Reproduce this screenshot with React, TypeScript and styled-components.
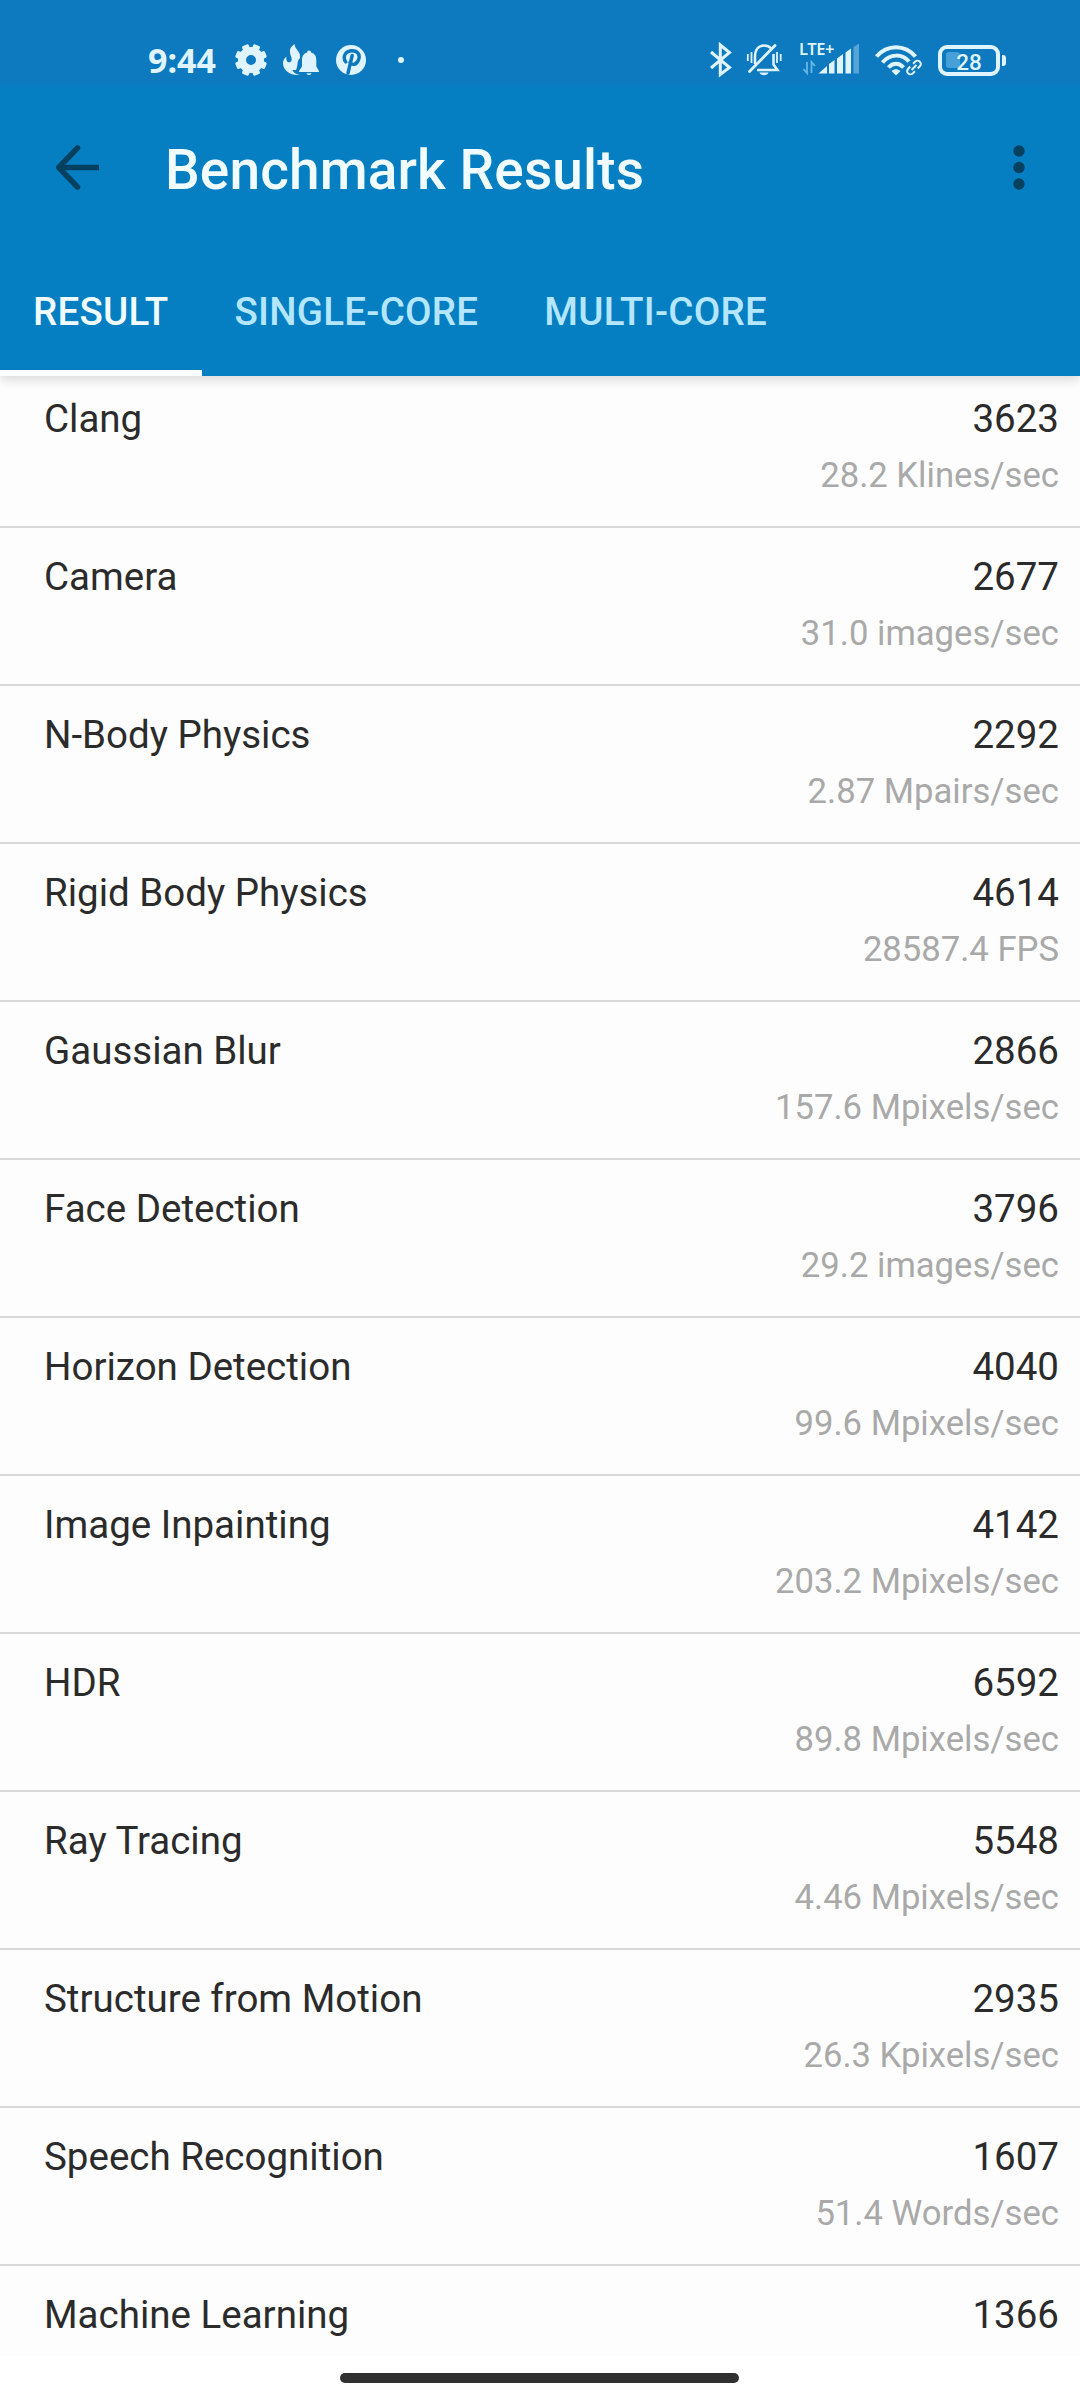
import React from "react";
import styled, { createGlobalStyle } from "styled-components";

const Global = createGlobalStyle`
  * { box-sizing: border-box; }
  body { margin: 0; background: #fdfdfd; font-family: Roboto, "Liberation Sans", sans-serif; }
`;

const Screen = styled.div`
  width: 1080px;
  height: 2400px;
  display: flex;
  flex-direction: column;
  overflow: hidden;
  background: #fdfdfd;
`;

const Header = styled.header`
  position: relative;
  z-index: 1;
  height: 376px;
  flex: none;
  display: flex;
  flex-direction: column;
  background: #057fc2;
  box-shadow: 0 3px 11px rgba(0, 0, 0, 0.16);
`;

const StatusBar = styled.div`
  height: 88px;
  flex: none;
  display: flex;
  justify-content: space-between;
  padding: 30px 80px 0 148px;
  background: linear-gradient(#0d79bf 94%, #057fc2 99%);
  color: #dff4ff;
`;

const Clock = styled.span`
  width: 79px;
  font: 700 34px/60px "Noto Sans", "Open Sans", sans-serif;
`;

const StatusGroup = styled.div`
  display: flex;
  height: 60px;
`;

const AppBar = styled.div`
  height: 160px;
  flex: none;
  display: flex;
  align-items: center;
  padding: 0 36px 1px 50px;
`;

const IconButton = styled.button`
  display: flex;
  padding: 0;
  border: 0;
  background: none;
  color: #04405f;
`;

const Title = styled.h1`
  flex: 1;
  margin: 5px 0 0 61px;
  font-size: 55px;
  line-height: 64px;
  font-weight: 500;
  letter-spacing: 0.12px;
  color: #f0fcff;
`;

const Tabs = styled.nav`
  display: flex;
  height: 128px;
`;

const Tab = styled.button<{ $active?: boolean }>`
  padding: 0 33px 2px;
  border: 0;
  border-top: 6px solid transparent;
  border-bottom: 6px solid ${(p) => (p.$active ? "#fbffff" : "transparent")};
  background: none;
  font: 500 38.5px/45px Roboto, sans-serif;
  letter-spacing: 0.25px;
  color: ${(p) => (p.$active ? "#f0fcff" : "#b5e6ff")};
`;

const List = styled.main`
  height: 1986px;
  flex: none;
  overflow: hidden;
  margin-top: -6px;
`;

const Row = styled.section`
  height: 158px;
  display: flex;
  justify-content: space-between;
  padding: 26px 21px 0 44px;
  border-bottom: 2px solid #d9d9d9;
`;

const Name = styled.span`
  font-size: 38.5px;
  line-height: 45px;
  color: #2b2b2b;
`;

const Values = styled.div`
  display: flex;
  flex-direction: column;
  align-items: flex-end;
  gap: 14px;
`;

const Rate = styled.span`
  font-size: 34.65px;
  line-height: 41px;
  color: #a9a9a9;
`;

const NavBar = styled.footer`
  flex: 1;
  display: flex;
  justify-content: center;
  padding: 17px 1px 0 0;
  background: #fff;
`;

const Handle = styled.div`
  width: 399px;
  height: 10px;
  border-radius: 5px;
  background: #303030;
`;

const results = [
  ["Clang", "3623", "28.2 Klines/sec"],
  ["Camera", "2677", "31.0 images/sec"],
  ["N-Body Physics", "2292", "2.87 Mpairs/sec"],
  ["Rigid Body Physics", "4614", "28587.4 FPS"],
  ["Gaussian Blur", "2866", "157.6 Mpixels/sec"],
  ["Face Detection", "3796", "29.2 images/sec"],
  ["Horizon Detection", "4040", "99.6 Mpixels/sec"],
  ["Image Inpainting", "4142", "203.2 Mpixels/sec"],
  ["HDR", "6592", "89.8 Mpixels/sec"],
  ["Ray Tracing", "5548", "4.46 Mpixels/sec"],
  ["Structure from Motion", "2935", "26.3 Kpixels/sec"],
  ["Speech Recognition", "1607", "51.4 Words/sec"],
  ["Machine Learning", "1366", ""],
];

const teeth = [22.5, 67.5, 112.5, 157.5, 202.5, 247.5, 292.5, 337.5];

const NotificationIcons = () => (
  <svg width="203" height="60" viewBox="0 0 203 60" fill="currentColor">
    <circle cx="24" cy="30" r="9" fill="none" stroke="currentColor" strokeWidth="8" />
    {teeth.map((a) => (
      <rect key={a} x="20.4" y="14" width="7.2" height="6" rx="1.6" transform={`rotate(${a} 24 30)`} />
    ))}
    <path d="M67.500 14C68 20 74 21 73 28C69.500 31 71.500 35 69 40H65.500C67 44 71 44.500 73 45C63 46 56 40 56 33.500C56 30.500 57 28.500 59.500 26.500C58.500 31 61 33 63.500 32C67 29 62 25 63 20C63.400 17.500 65 16 67.500 14Z" />
    <path d="M82 20.500C83.300 20.500 84 21.300 84 22.500C88 23.500 89.300 26.500 89.300 30V36.500L92 41V42H72V41L75 36.500V30C75 26.500 76.500 23.500 80.200 22.500C80.200 21.300 80.800 20.500 82 20.500ZM79.500 43.300H84.500C84 45.700 80 45.700 79.500 43.300Z" />
    <circle cx="124" cy="30" r="15" />
    <path d="M121 43L125.200 25.500M118.800 32C115 27 118.500 20.800 125 20.800C131 20.800 133.500 25 131.500 30C129.500 35 125 35.500 123 32.500" fill="none" stroke="#0d78be" strokeWidth="3.400" strokeLinecap="round" />
    <circle cx="174" cy="30" r="3" />
  </svg>
);

const Bluetooth = () => (
  <svg width="42" height="60" viewBox="0 0 42 60" fill="none" stroke="currentColor" strokeWidth="3">
    <path d="M10 22L28.500 37.500L19.300 44.500V15L28.500 22.500L10 38" />
  </svg>
);

const MutedBell = () => (
  <svg width="54" height="60" viewBox="0 0 54 60" fill="none" stroke="currentColor" strokeWidth="2.500">
    <path d="M12 34V27C12 20 15.500 15.500 21 15.500C24.500 15.500 26.500 16.500 28.200 18.500M30.500 24V34.500L34.500 40H14" />
    <path d="M6.500 41.500L32 15.500" strokeWidth="2.800" strokeLinecap="round" />
    <path d="M16.500 42.500H25.500C24.500 46 17.500 46 16.500 42.500Z" fill="currentColor" stroke="none" />
    <path d="M4.800 24V31M8.500 22V33M34 22V33M37.700 24V31" strokeWidth="1.800" />
  </svg>
);

const NetLabel = styled.span`
  height: 18px;
  padding-left: 2px;
  font: 600 16.5px/37px "Noto Sans", sans-serif;
  letter-spacing: -0.4px;
`;

const Network = styled.div`
  display: flex;
  flex-direction: column;
  width: 76px;
`;

const Signal = () => (
  <svg width="76" height="42" viewBox="0 18 76 42" fill="currentColor" overflow="visible">
    <path d="M10 32V43L6.500 39M14.500 43V32L18 36" fill="none" stroke="#66b7e5" strokeWidth="1.800" />
    <path d="M21.500 43.500L30 36V43.500ZM32 34L37.500 30V43.500H32ZM40 28.500L46 24V43.500H40ZM48.500 22.500L54 18.500V43.500H48.500Z" />
    <path d="M56.500 17L62 13.500V43.500H56.500Z" opacity=".35" />
  </svg>
);

const Wifi = () => (
  <svg width="65" height="60" viewBox="0 0 65 60" fill="none" stroke="currentColor">
    <path d="M3.500 26.500C14 14 32 14 42.500 26.500M9.500 32.500C17 23.500 29 23.500 36 31.500" strokeWidth="4" />
    <path d="M15.500 37.500C20 32.500 26 32.500 30.500 37.500" strokeWidth="4" />
    <path d="M18.500 41C21.500 38.500 24.500 38.500 27.500 41L23 45.500Z" fill="currentColor" stroke="none" />
    <g transform="translate(41 37.500) rotate(-45)">
      <path d="M-2 -3.300H-5A3.300 3.300 0 0 0 -5 3.300H-2M2 -3.300H5A3.300 3.300 0 0 1 5 3.300H2M-3.500 0H3.500" strokeWidth="2" />
    </g>
  </svg>
);

const Battery = styled.div`
  position: relative;
  width: 62px;
  height: 31px;
  margin-top: 14.5px;
  border: 4px solid currentColor;
  border-radius: 9px;
  padding: 3.500px;
  &::after {
    content: "";
    position: absolute;
    right: -10px;
    top: 6px;
    width: 4px;
    height: 11px;
    border-radius: 0 3px 3px 0;
    background: currentColor;
  }
`;

const Charge = styled.div`
  width: 14px;
  height: 16px;
  border-radius: 3px;
  background: #479fd8;
`;

const Percent = styled.span`
  position: absolute;
  inset: 0;
  text-align: center;
  font: 500 22.5px/26px Roboto, sans-serif;
`;

export default function App() {
  return (
    <Screen>
      <Global />
      <Header>
        <StatusBar>
          <StatusGroup>
            <Clock>9:44</Clock>
            <NotificationIcons />
          </StatusGroup>
          <StatusGroup>
            <Bluetooth />
            <MutedBell />
            <Network>
              <NetLabel>LTE+</NetLabel>
              <Signal />
            </Network>
            <Wifi />
            <Battery>
              <Charge />
              <Percent>28</Percent>
            </Battery>
          </StatusGroup>
        </StatusBar>
        <AppBar>
          <IconButton aria-label="Back">
            <svg width="54" height="54" viewBox="0 0 54 54" fill="none" stroke="currentColor" strokeWidth="5.500" strokeLinejoin="round">
              <path d="M49 26.500H9" />
              <path d="M27.500 7L8.700 26.500L27.500 46" strokeLinecap="round" />
            </svg>
          </IconButton>
          <Title>Benchmark Results</Title>
          <IconButton aria-label="More options">
            <svg width="50" height="50" viewBox="0 0 50 50" fill="currentColor">
              <circle cx="25" cy="8" r="5.700" />
              <circle cx="25" cy="24.500" r="5.700" />
              <circle cx="25" cy="41" r="5.700" />
            </svg>
          </IconButton>
        </AppBar>
        <Tabs>
          <Tab $active>RESULT</Tab>
          <Tab>SINGLE-CORE</Tab>
          <Tab>MULTI-CORE</Tab>
        </Tabs>
      </Header>
      <List>
        {results.map(([name, score, rate]) => (
          <Row key={name}>
            <Name>{name}</Name>
            <Values>
              <Name>{score}</Name>
              {rate && <Rate>{rate}</Rate>}
            </Values>
          </Row>
        ))}
      </List>
      <NavBar>
        <Handle />
      </NavBar>
    </Screen>
  );
}
